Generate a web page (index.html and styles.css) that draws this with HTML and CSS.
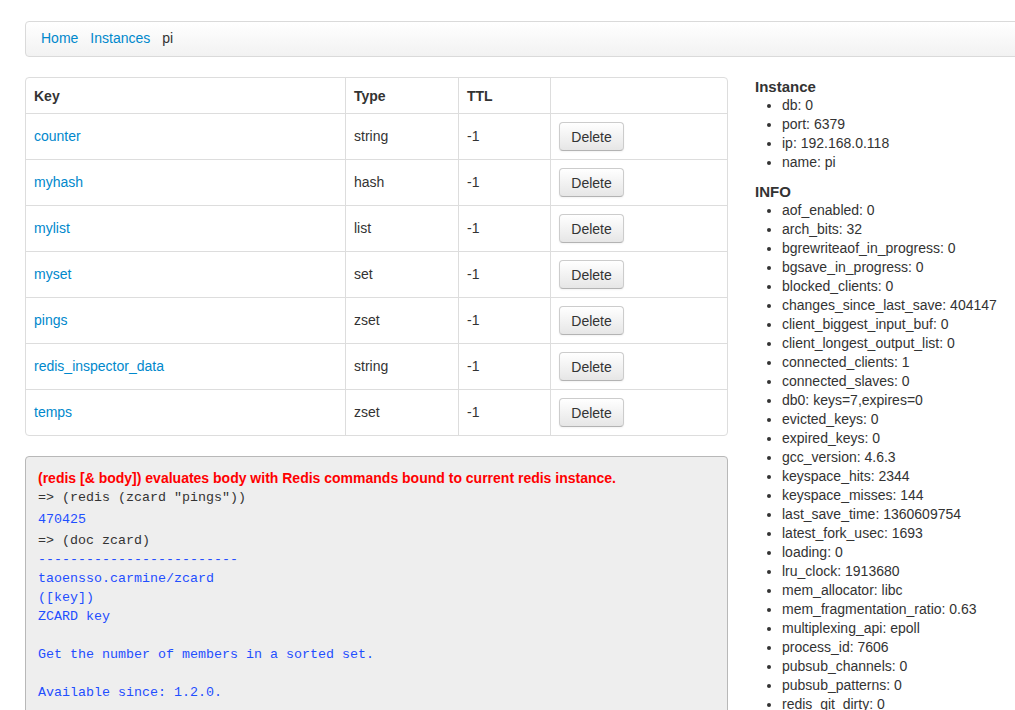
FILE: index.html
```html
<!DOCTYPE html>
<html>
<head>
<meta charset="utf-8">
<link rel="stylesheet" href="styles.css">
</head>
<body>
<div class="page">
  <ul class="breadcrumb">
    <li><a href="#">Home</a></li>
    <li><a href="#">Instances</a></li>
    <li class="active">pi</li>
  </ul>
  <div class="row">
    <div class="main">
      <table class="keys">
        <thead>
          <tr><th class="c-key">Key</th><th class="c-type">Type</th><th class="c-ttl">TTL</th><th class="c-act"></th></tr>
        </thead>
        <tbody>
          <tr><td><a href="#">counter</a></td><td>string</td><td>-1</td><td><button class="btn">Delete</button></td></tr>
          <tr><td><a href="#">myhash</a></td><td>hash</td><td>-1</td><td><button class="btn">Delete</button></td></tr>
          <tr><td><a href="#">mylist</a></td><td>list</td><td>-1</td><td><button class="btn">Delete</button></td></tr>
          <tr><td><a href="#">myset</a></td><td>set</td><td>-1</td><td><button class="btn">Delete</button></td></tr>
          <tr><td><a href="#">pings</a></td><td>zset</td><td>-1</td><td><button class="btn">Delete</button></td></tr>
          <tr><td><a href="#">redis_inspector_data</a></td><td>string</td><td>-1</td><td><button class="btn">Delete</button></td></tr>
          <tr><td><a href="#">temps</a></td><td>zset</td><td>-1</td><td><button class="btn">Delete</button></td></tr>
        </tbody>
      </table>
      <div class="repl">
        <div class="repl-title">(redis [&amp; body]) evaluates body with Redis commands bound to current redis instance.</div>
        <div class="line prompt">=&gt; (redis (zcard "pings"))</div>
        <div class="line out first-out">470425</div>
        <div class="line prompt second">=&gt; (doc zcard)</div>
        <pre class="line out">-------------------------
taoensso.carmine/zcard
([key])
ZCARD key

Get the number of members in a sorted set.

Available since: 1.2.0.</pre>
      </div>
    </div>
    <div class="side">
      <h5>Instance</h5>
      <ul class="props">
        <li>db: 0</li>
        <li>port: 6379</li>
        <li>ip: 192.168.0.118</li>
        <li>name: pi</li>
      </ul>
      <h5>INFO</h5>
      <ul class="props">
        <li>aof_enabled: 0</li>
        <li>arch_bits: 32</li>
        <li>bgrewriteaof_in_progress: 0</li>
        <li>bgsave_in_progress: 0</li>
        <li>blocked_clients: 0</li>
        <li>changes_since_last_save: 404147</li>
        <li>client_biggest_input_buf: 0</li>
        <li>client_longest_output_list: 0</li>
        <li>connected_clients: 1</li>
        <li>connected_slaves: 0</li>
        <li>db0: keys=7,expires=0</li>
        <li>evicted_keys: 0</li>
        <li>expired_keys: 0</li>
        <li>gcc_version: 4.6.3</li>
        <li>keyspace_hits: 2344</li>
        <li>keyspace_misses: 144</li>
        <li>last_save_time: 1360609754</li>
        <li>latest_fork_usec: 1693</li>
        <li>loading: 0</li>
        <li>lru_clock: 1913680</li>
        <li>mem_allocator: libc</li>
        <li>mem_fragmentation_ratio: 0.63</li>
        <li>multiplexing_api: epoll</li>
        <li>process_id: 7606</li>
        <li>pubsub_channels: 0</li>
        <li>pubsub_patterns: 0</li>
        <li>redis_git_dirty: 0</li>
      </ul>
    </div>
  </div>
</div>
</body>
</html>
```
FILE: styles.css
```css
html {
  overflow: hidden;
}
body {
  margin: 0;
  font-family: "Liberation Sans", Arial, Helvetica, sans-serif;
  font-size: 14px;
  line-height: 20px;
  color: #333333;
  background: #ffffff;
}
a {
  color: #0088cc;
  text-decoration: none;
}
.page {
  width: 1068px;
  padding: 21px 0 0 25px;
}
.breadcrumb {
  display: flex;
  gap: 12px;
  list-style: none;
  margin: 0 0 20px 0;
  padding: 6px 15px 8px 15px;
  border: 1px solid #dadada;
  border-radius: 4px;
  background: linear-gradient(#ffffff, #f2f2f2);
  line-height: 20px;
}
.breadcrumb .active {
  color: #333333;
}
.row {
  display: flex;
  gap: 27px;
}
.main {
  width: 703px;
  flex: none;
}
.side {
  flex: 1;
}
.keys {
  width: 100%;
  border-collapse: separate;
  border-spacing: 0;
  border: 1px solid #dddddd;
  border-radius: 4px;
  margin-bottom: 20px;
}
.keys th,
.keys td {
  padding: 8px;
  text-align: left;
  vertical-align: middle;
  line-height: 20px;
  border-left: 1px solid #dddddd;
  border-top: 1px solid #dddddd;
}
.keys td {
  padding-top: 7px;
  padding-bottom: 9px;
}
.keys th {
  font-weight: bold;
  border-top: none;
  padding-top: 8px;
  padding-bottom: 7px;
}
.keys th:first-child,
.keys td:first-child {
  border-left: none;
}
.c-key { width: 303px; }
.c-type { width: 96px; }
.c-ttl { width: 75px; }
.btn {
  display: block;
  width: 65px;
  height: 29px;
  padding: 0;
  margin-top: 1px;
  margin-bottom: -1px;
  font-family: "Liberation Sans", Arial, sans-serif;
  font-size: 14px;
  color: #333333;
  border: 1px solid #cccccc;
  border-bottom-color: #b3b3b3;
  border-radius: 4px;
  background: linear-gradient(#ffffff, #e6e6e6);
  box-shadow: inset 0 1px 0 rgba(255,255,255,0.2), 0 1px 2px rgba(0,0,0,0.05);
}
.repl {
  background: #eeeeee;
  border: 1px solid #b8b8b8;
  border-radius: 4px;
  padding: 12px 12px 40px 12px;
}
.repl-title {
  color: #ff0000;
  font-weight: bold;
  line-height: 19px;
}
.line {
  font-family: "Liberation Mono", "Courier New", monospace;
  font-size: 13.33px;
  line-height: 19px;
  margin: 0;
}
.prompt {
  color: #333333;
}
.out {
  color: #1f4fff;
}
.first-out {
  margin-top: 3px;
}
.second {
  margin-top: 2px;
}
pre.line {
  white-space: pre;
}
.side h5 {
  margin: 0;
  font-size: 15px;
  font-weight: bold;
  line-height: 19px;
  color: #333333;
}
.props {
  margin: 0 0 10px 0;
  padding-left: 27px;
  list-style: disc;
}
.props li {
  line-height: 19px;
}
```
